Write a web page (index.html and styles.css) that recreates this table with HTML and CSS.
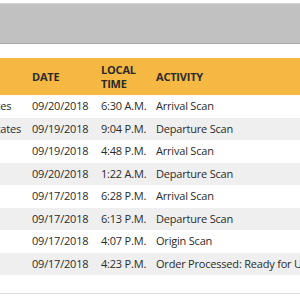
FILE: index.html
```html
<!DOCTYPE html>
<html>
<head>
<meta charset="utf-8">
<link rel="stylesheet" href="styles.css">
</head>
<body>
<div class="topbar"></div>
<div class="scroller">
  <table class="track">
    <colgroup>
      <col class="c-loc"><col class="c-date"><col class="c-time"><col class="c-act">
    </colgroup>
    <thead>
      <tr><th>LOCATION</th><th>DATE</th><th>LOCAL<br>TIME</th><th>ACTIVITY</th></tr>
    </thead>
    <tbody>
      <tr><td>Louisville, KY, United States</td><td>09/20/2018</td><td>6:30 A.M.</td><td>Arrival Scan</td></tr>
      <tr><td>Jacksonville, FL, United States</td><td>09/19/2018</td><td>9:04 P.M.</td><td>Departure Scan</td></tr>
      <tr><td></td><td>09/19/2018</td><td>4:48 P.M.</td><td>Arrival Scan</td></tr>
      <tr><td></td><td>09/20/2018</td><td>1:22 A.M.</td><td>Departure Scan</td></tr>
      <tr><td></td><td>09/17/2018</td><td>6:28 P.M.</td><td>Arrival Scan</td></tr>
      <tr><td></td><td>09/17/2018</td><td>6:13 P.M.</td><td>Departure Scan</td></tr>
      <tr><td></td><td>09/17/2018</td><td>4:07 P.M.</td><td>Origin Scan</td></tr>
      <tr><td></td><td>09/17/2018</td><td>4:23 P.M.</td><td>Order Processed: Ready for UPS</td></tr>
    </tbody>
  </table>
</div>
<div class="footer-line"></div>
</body>
</html>
```
FILE: styles.css
```css
html, body {
  margin: 0;
  padding: 0;
  background: #ffffff;
  font-family: "Open Sans", "Noto Sans", sans-serif;
  color: #2b2b2b;
}
.topbar {
  margin-top: 3px;
  height: 39px;
  background: #c1c1c1;
  border-top: 1px solid #d2d2d2;
  border-bottom: 1px solid #a9a9a9;
}
.scroller {
  margin-top: 14px;
  width: 300px;
  overflow: hidden;
}
.track {
  border-collapse: collapse;
  table-layout: fixed;
  width: 460px;
  margin-left: -130px;
  font-size: 11px;
  letter-spacing: -0.2px;
}
.c-loc { width: 155px; }
.c-date { width: 69px; }
.c-time { width: 55px; }
.c-act { width: 181px; }
.track th {
  background: #f5b843;
  height: 37px;
  padding: 0 0 0 7px;
  text-align: left;
  font-weight: 700;
  line-height: 14px;
  color: #2a2a2a;
  vertical-align: middle;
}
.track td {
  height: 22.5px;
  padding: 0 0 0 7px;
  white-space: nowrap;
  overflow: hidden;
  vertical-align: middle;
  line-height: 14px;
}
.track tbody tr:nth-child(even) td {
  background: #efefef;
}
.footer-line {
  margin-top: 18px;
  border-top: 1px solid #dcdcdc;
}
```
